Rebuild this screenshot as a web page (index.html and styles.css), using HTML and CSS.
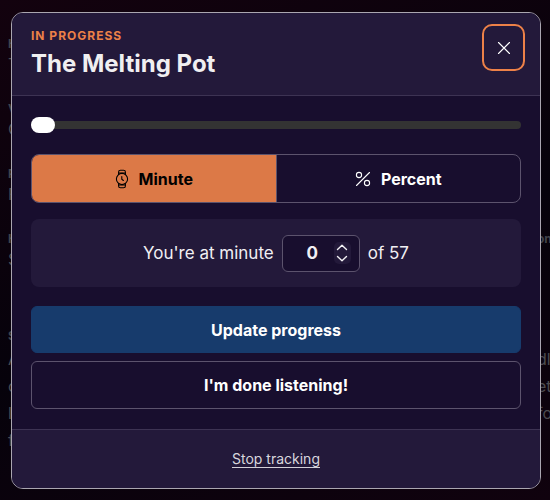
FILE: index.html
```html
<!DOCTYPE html>
<html lang="en">
<head>
<meta charset="utf-8">
<meta name="viewport" content="width=device-width, initial-scale=1">
<title>The Melting Pot</title>
<link rel="stylesheet" href="styles.css">
</head>
<body>
<div class="backdrop" aria-hidden="true">
  <div class="behind behind-left">
    <b>H</b><span>T</span>
    <b class="gap">V</b><span>C</span>
    <b class="gap">P</b><span>F</span>
    <b class="gap">H</b><span>S</span>
    <b class="gap-large">S</b>
    <p>A<br>c<br>l<br>f</p>
  </div>
  <div class="behind behind-right">
    <b>on</b>
    <p>dl<br>et<br>fo</p>
  </div>
</div>
<main class="modal" role="dialog" aria-labelledby="title">
  <header class="modal-header">
    <div>
      <p class="status">IN PROGRESS</p>
      <h1 id="title">The Melting Pot</h1>
    </div>
    <button class="close" type="button" aria-label="Close">
      <svg width="14" height="14" viewBox="0 0 14 14" fill="none" stroke="currentColor" stroke-width="1.1" stroke-linecap="round"><path d="M1.5 1.5l11 11M12.5 1.5l-11 11"/></svg>
    </button>
  </header>
  <form class="modal-body">
    <input class="slider" type="range" min="0" max="57" value="0" aria-label="Progress">
    <div class="toggle" role="group" aria-label="Unit">
      <button class="option selected" type="button" aria-pressed="true">
        <svg width="14" height="20" viewBox="0 0 14 20" fill="none" stroke="currentColor" stroke-width="1.1" stroke-linecap="round" stroke-linejoin="round"><circle cx="7" cy="10" r="5.6"/><path d="M3.6 5.4V3q0-1.8 1.8-1.8h3.2q1.8 0 1.8 1.8v2.4M3.6 14.6V17q0 1.8 1.8 1.8h3.2q1.8 0 1.8-1.8v-2.4M4 4h6M4 16h6M6.8 7.5v2.8l1.6 1.2"/></svg>
        Minute
      </button>
      <button class="option" type="button" aria-pressed="false">
        <svg width="16" height="16" viewBox="0 0 16 16" fill="none" stroke="currentColor" stroke-width="1.1" stroke-linecap="round"><path d="M14.5 1.5l-13 13"/><circle cx="4" cy="4" r="2.6"/><circle cx="12" cy="12" r="2.6"/></svg>
        Percent
      </button>
    </div>
    <div class="position">
      <label for="minute">You're at minute</label>
      <div class="number">
        <input id="minute" type="number" min="0" max="57" value="0">
        <div class="stepper">
          <button type="button" aria-label="Increase"><svg width="12" height="7" viewBox="0 0 12 7" fill="none" stroke="currentColor" stroke-width="1.4" stroke-linecap="round" stroke-linejoin="round"><path d="M1.5 5.5L6 1.2l4.5 4.3"/></svg></button>
          <button type="button" aria-label="Decrease"><svg width="12" height="7" viewBox="0 0 12 7" fill="none" stroke="currentColor" stroke-width="1.4" stroke-linecap="round" stroke-linejoin="round"><path d="M1.5 1.5L6 5.8l4.5-4.3"/></svg></button>
        </div>
      </div>
      <span>of 57</span>
    </div>
    <div class="actions">
      <button class="action primary" type="submit">Update progress</button>
      <button class="action" type="button">I'm done listening!</button>
    </div>
  </form>
  <footer class="modal-footer"><a href="#">Stop tracking</a></footer>
</main>
</body>
</html>
```
FILE: styles.css
```css
* { box-sizing: border-box; }

body {
  margin: 0;
  padding: 12px 9px 11px 11px;
  background: #0b030d;
  color: #fff;
  font-family: Inter, "Liberation Sans", sans-serif;
  font-size: 16px;
}

p, h1 { margin: 0; }
svg { display: block; flex: none; }
button, input { font: inherit; color: inherit; margin: 0; }
button { cursor: pointer; }

.backdrop {
  position: absolute;
  inset: 0;
  overflow: hidden;
  background: linear-gradient(160deg, #13020e, #06020b 55%, #10020e);
  color: #4c4b50;
}

.behind { position: absolute; display: flex; flex-direction: column; line-height: 20px; }
.behind b { font-size: 12px; color: #41434b; }
.behind p { line-height: 27px; }
.behind-left { left: 8px; top: 34px; }
.behind-left .gap { margin-top: 25px; }
.behind-left .gap-large { margin-top: 57px; }
.behind-right { left: 537px; top: 229px; }
.behind-right p { margin-top: 97px; }

.modal {
  position: relative;
  overflow: hidden;
  border: 1px solid #aaa6b0;
  border-radius: 12px;
  background: #180e2e;
}

.modal-header {
  display: flex;
  justify-content: space-between;
  align-items: flex-start;
  padding: 11px 15px 15px 19px;
  border-bottom: 1px solid #3d3353;
  background: #23193a;
}

.status {
  padding-top: 4px;
  color: #ed8148;
  font-size: 12px;
  font-weight: 700;
  line-height: 16px;
  letter-spacing: 1px;
}

h1 {
  padding-top: 4px;
  color: #f0eff1;
  font-size: 24px;
  font-weight: 700;
  line-height: 32px;
}

.close {
  display: grid;
  place-items: center;
  width: 43px;
  height: 47px;
  padding: 0;
  border: 2px solid #ed8148;
  border-radius: 10px;
  background: transparent;
}

.modal-body { padding: 21px 19px 20px; }

.slider {
  display: block;
  appearance: none;
  width: 100%;
  height: 16px;
  background: transparent;
}
.slider::-webkit-slider-runnable-track { height: 8px; border-radius: 4px; background: #333; }
.slider::-webkit-slider-thumb {
  appearance: none;
  width: 24px;
  height: 16px;
  margin-top: -4px;
  border-radius: 8px;
  background: #fff;
}

.toggle {
  display: flex;
  height: 49px;
  margin-top: 21px;
  overflow: hidden;
  border: 1px solid #5c536d;
  border-radius: 8px;
}
.option {
  display: flex;
  flex: 1;
  align-items: center;
  justify-content: center;
  gap: 10px;
  padding: 0;
  border: 0;
  background: transparent;
  font-weight: 700;
}
.selected { background: #dc7947; color: #000; }
.option + .option { border-left: 1px solid #5c536d; }

.position {
  display: flex;
  align-items: center;
  justify-content: center;
  gap: 8px;
  height: 68px;
  margin-top: 16px;
  border-radius: 8px;
  background: #23193a;
  color: #f1eff3;
  font-size: 17px;
}
.number {
  display: flex;
  align-items: center;
  width: 78px;
  height: 37px;
  padding-right: 8px;
  border: 1px solid #5c536d;
  border-radius: 6px;
  background: #180e2e;
}
.number input {
  appearance: textfield;
  flex: 1;
  min-width: 0;
  padding: 0 0 0 8px;
  border: 0;
  outline: 0;
  background: transparent;
  font-size: 17px;
  font-weight: 700;
  text-align: center;
}
.number input::-webkit-inner-spin-button { appearance: none; margin: 0; }
.stepper { width: 17px; border-radius: 5px; overflow: hidden; background: #23193a; }
.stepper button {
  display: grid;
  place-items: center;
  width: 100%;
  height: 11px;
  padding: 0;
  border: 0;
  background: transparent;
}

.actions { display: grid; gap: 8px; margin-top: 19px; }
.action {
  height: 48px;
  border: 1px solid #5c536d;
  border-radius: 6px;
  background: transparent;
  font-weight: 700;
}
.primary { height: 47px; border-color: #173b6c; background: #173b6c; }

.modal-footer {
  padding: 20px;
  border-top: 1px solid #3d3353;
  background: #23193a;
  text-align: center;
  font-size: 14px;
  line-height: 18px;
}
.modal-footer a { border-bottom: 1px solid #d3d0d8; color: #d9d6dd; text-decoration: none; }
```
